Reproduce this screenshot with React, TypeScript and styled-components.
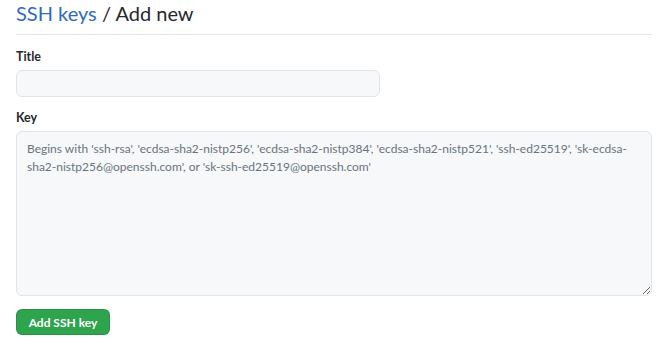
import React from 'react';
import styled, { createGlobalStyle } from 'styled-components';

const GlobalStyle = createGlobalStyle`
  body {
    margin: 0;
    background: #fff;
    font-family: "Segoe UI", Lato, "Liberation Sans", sans-serif;
    color: #24292e;
  }
`;

const Container = styled.div`
  padding: 0 13px 0 16px;
`;

const Heading = styled.h2`
  margin: 0;
  font-size: 20px;
  font-weight: 400;
  line-height: 26px;
  padding-bottom: 8px;
  border-bottom: 1px solid #e1e4e8;
  color: #24292e;
`;

const Crumb = styled.a`
  color: #2f6bbd;
  text-decoration: none;
`;

const Form = styled.form`
  display: flex;
  flex-direction: column;
  align-items: flex-start;
  padding-top: 13px;
`;

const Field = styled.div`
  display: flex;
  flex-direction: column;
  gap: 4px;
  width: 100%;
  margin-bottom: 12px;
`;

const Label = styled.label`
  font-size: 12.5px;
  font-weight: 700;
  line-height: 18px;
`;

const TextInput = styled.input`
  box-sizing: border-box;
  width: 364px;
  height: 27px;
  padding: 4px 10px;
  font: inherit;
  font-size: 13px;
  background: #f6f8fa;
  border: 1px solid #e1e4e8;
  border-radius: 6px;
  outline: none;
`;

const KeyArea = styled.textarea`
  box-sizing: border-box;
  width: 100%;
  height: 165px;
  padding: 8px 10px;
  font: inherit;
  font-size: 12px;
  line-height: 18px;
  background: #f6f8fa;
  border: 1px solid #e1e4e8;
  border-radius: 6px;
  outline: none;
  color: #24292e;

  &::placeholder {
    color: #6a737d;
  }
`;

const SubmitButton = styled.button`
  margin-top: 1px;
  box-sizing: border-box;
  height: 26px;
  width: 94px;
  padding: 0;
  font: inherit;
  font-size: 12px;
  font-weight: 700;
  white-space: nowrap;
  color: #fff;
  background: #2ea44f;
  border: 1px solid rgba(27, 31, 35, 0.15);
  border-radius: 6px;
  cursor: pointer;
`;

const App: React.FC = () => (
  <>
    <GlobalStyle />
    <Container>
      <Heading>
        <Crumb href="#">SSH keys</Crumb> / Add new
      </Heading>
      <Form onSubmit={(e) => e.preventDefault()}>
        <Field>
          <Label htmlFor="title">Title</Label>
          <TextInput id="title" type="text" />
        </Field>
        <Field>
          <Label htmlFor="key">Key</Label>
          <KeyArea
            id="key"
            placeholder="Begins with 'ssh-rsa', 'ecdsa-sha2-nistp256', 'ecdsa-sha2-nistp384', 'ecdsa-sha2-nistp521', 'ssh-ed25519', 'sk-ecdsa-sha2-nistp256@openssh.com', or 'sk-ssh-ed25519@openssh.com'"
          />
        </Field>
        <SubmitButton type="submit">Add SSH key</SubmitButton>
      </Form>
    </Container>
  </>
);

export default App;
